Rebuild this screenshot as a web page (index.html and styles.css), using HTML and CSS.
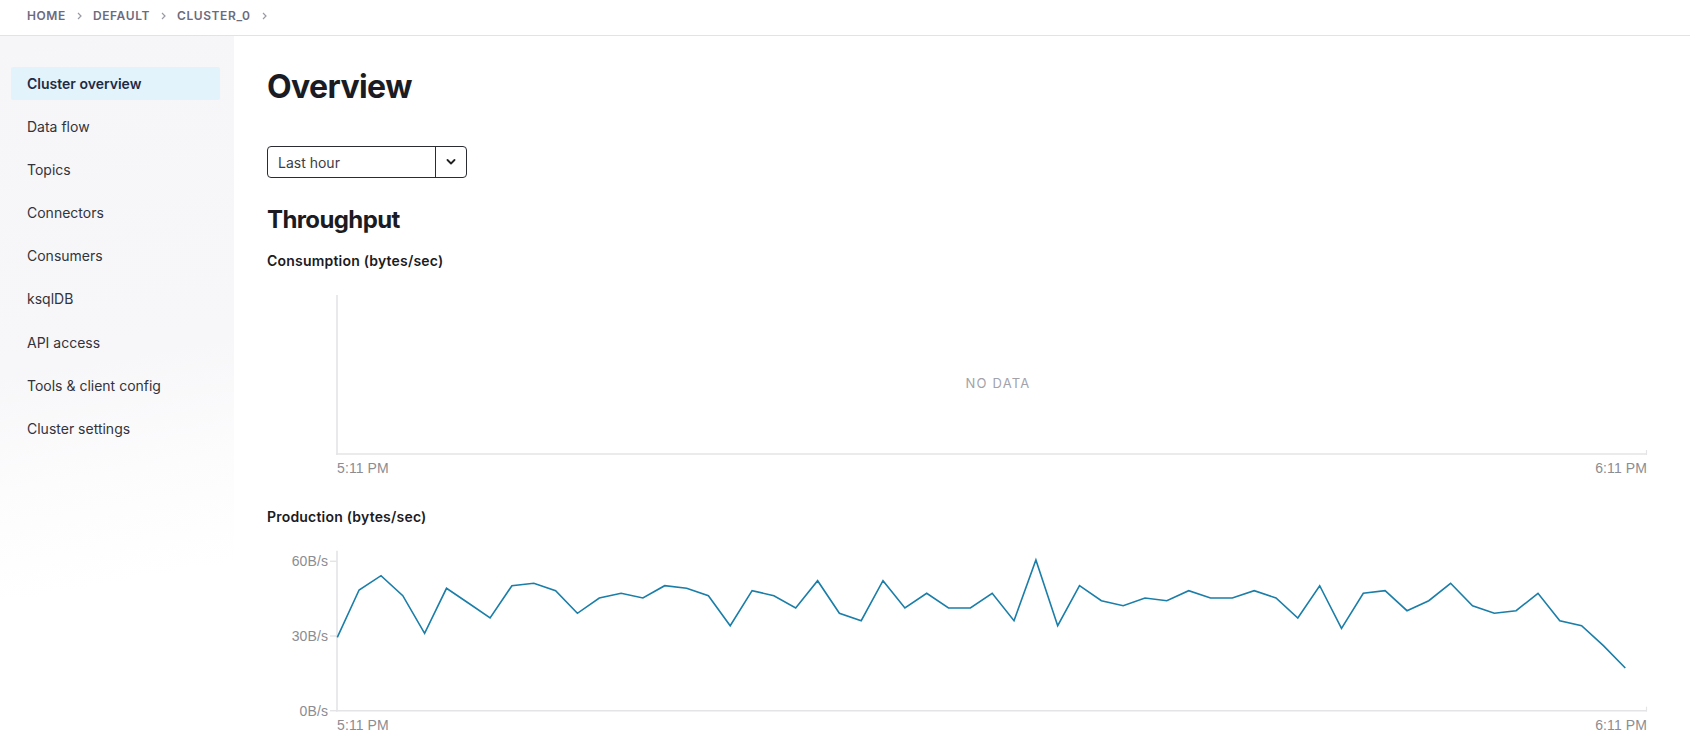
FILE: index.html
```html
<!DOCTYPE html>
<html lang="en">
<head>
<meta charset="utf-8">
<title>Overview</title>
<link rel="stylesheet" href="styles.css">
</head>
<body>
<header class="topbar">
  <nav class="crumbs">
    <span class="crumb">HOME</span>
    <svg class="chev" width="5" height="8" viewBox="0 0 5 8"><path d="M1 1l3 3-3 3" fill="none" stroke="#9a9aa6" stroke-width="1.2"/></svg>
    <span class="crumb">DEFAULT</span>
    <svg class="chev" width="5" height="8" viewBox="0 0 5 8"><path d="M1 1l3 3-3 3" fill="none" stroke="#9a9aa6" stroke-width="1.2"/></svg>
    <span class="crumb">CLUSTER_0</span>
    <svg class="chev" width="5" height="8" viewBox="0 0 5 8"><path d="M1 1l3 3-3 3" fill="none" stroke="#9a9aa6" stroke-width="1.2"/></svg>
  </nav>
</header>
<div class="layout">
  <aside class="sidebar">
    <a class="nav-item active">Cluster overview</a>
    <a class="nav-item">Data flow</a>
    <a class="nav-item">Topics</a>
    <a class="nav-item">Connectors</a>
    <a class="nav-item">Consumers</a>
    <a class="nav-item">ksqlDB</a>
    <a class="nav-item">API access</a>
    <a class="nav-item">Tools &amp; client config</a>
    <a class="nav-item">Cluster settings</a>
  </aside>
  <main class="main">
    <h1 class="title">Overview</h1>
    <div class="select">
      <span class="select-value">Last hour</span>
      <span class="select-btn"><svg width="10" height="6" viewBox="0 0 10 6"><path d="M1.5 1l3.5 3.5L8.5 1" fill="none" stroke="#222" stroke-width="1.8" stroke-linecap="round" stroke-linejoin="round"/></svg></span>
    </div>
    <h2 class="section">Throughput</h2>
    <h3 class="chart-title">Consumption (bytes/sec)</h3>
    <svg class="chart chart-empty" width="1389" height="208" viewBox="0 0 1389 208">
      <line x1="70" y1="24" x2="70" y2="184" stroke="#e4e4e6" stroke-width="1.6"/>
      <line x1="69" y1="183" x2="1380" y2="183" stroke="#e4e4e6" stroke-width="1.6"/>
      <line x1="1379.5" y1="179" x2="1379.5" y2="184" stroke="#e4e4e6" stroke-width="1.2"/>
      <text class="axis" x="70" y="202">5:11 PM</text>
      <text class="axis" x="1380" y="202" text-anchor="end">6:11 PM</text>
      <text class="nodata" x="731" y="117" text-anchor="middle">NO DATA</text>
    </svg>
    <h3 class="chart-title chart-title-2">Production (bytes/sec)</h3>
    <svg class="chart" width="1389" height="226" viewBox="0 0 1389 226">
      <line x1="70" y1="23.7" x2="70" y2="184.5" stroke="#e4e4e6" stroke-width="1.6"/>
      <line x1="69" y1="183.7" x2="1380" y2="183.7" stroke="#e4e4e6" stroke-width="1.6"/>
      <line x1="1379.5" y1="179.7" x2="1379.5" y2="184.5" stroke="#e4e4e6" stroke-width="1.2"/>
      <line x1="63" y1="34.3" x2="70" y2="34.3" stroke="#e4e4e6" stroke-width="1.4"/>
      <line x1="63" y1="109" x2="70" y2="109" stroke="#e4e4e6" stroke-width="1.4"/>
      <line x1="63" y1="183.7" x2="70" y2="183.7" stroke="#e4e4e6" stroke-width="1.4"/>
      <text class="axis" x="61" y="39.3" text-anchor="end">60B/s</text>
      <text class="axis" x="61" y="114" text-anchor="end">30B/s</text>
      <text class="axis" x="61" y="188.7" text-anchor="end">0B/s</text>
      <text class="axis" x="70" y="202.5">5:11 PM</text>
      <text class="axis" x="1380" y="202.5" text-anchor="end">6:11 PM</text>
      <polyline class="series" points="70.3,110.3 92.1,63 114,48.7 135.8,68.7 157.6,106.3 179.5,61.3 201.3,76 223.1,91 244.9,58.7 266.8,56.3 288.6,63.7 310.4,86.3 332.3,71 354.1,66.3 375.9,71 397.7,58.7 419.6,61.3 441.4,68.7 463.2,98.7 485.1,63.7 506.9,68.7 528.7,81 550.6,53.7 572.4,86.3 594.2,93.7 616,53.7 637.9,81 659.7,66.3 681.5,81 703.4,81 725.2,66.3 747,93.7 768.9,33 790.7,98.7 812.5,58.7 834.4,73.7 856.2,78.7 878,71 899.8,73.7 921.7,63.7 943.5,71 965.3,71 987.2,63.7 1009,71 1030.8,91 1052.7,58.7 1074.5,101.3 1096.3,66.3 1118.1,63.7 1140,83.7 1161.8,73.7 1183.6,56.3 1205.5,78.7 1227.3,86.3 1249.1,83.7 1271,66.3 1292.8,93.7 1314.6,98.7 1336.4,118.7 1358.3,141"/>
    </svg>
  </main>
</div>
</body>
</html>
```
FILE: styles.css
```css
* { box-sizing: border-box; }
html, body { margin: 0; padding: 0; }
body {
  font-family: Inter, "Noto Sans", "Liberation Sans", sans-serif;
  color: #1c1c24;
  background: #fff;
  width: 1690px;
  height: 754px;
  overflow: hidden;
}
.topbar {
  height: 36px;
  border-bottom: 1px solid #e3e3e6;
  display: flex;
  align-items: center;
  padding-left: 27px;
}
.crumbs {
  display: flex;
  align-items: center;
  gap: 11px;
  margin-top: -4px;
}
.crumb {
  font-size: 12px;
  font-weight: 600;
  letter-spacing: 0.6px;
  color: #6c6b7d;
  line-height: 16px;
}
.chev { display: block; }
.layout {
  display: flex;
  height: 718px;
}
.sidebar {
  width: 234px;
  flex: none;
  padding: 31px 14px 0 11px;
  display: flex;
  flex-direction: column;
  gap: 10.1px;
  background: linear-gradient(170deg, #f6f6f8 0%, #f7f7f9 45%, #fcfcfd 60%, #ffffff 75%);
}
.nav-item {
  display: flex;
  align-items: center;
  height: 33px;
  padding-left: 16px;
  font-size: 14px;
  color: #33333b;
  border-radius: 2px;
}
.nav-item.active {
  background: #e3f3fb;
  color: #1e2b45;
  font-weight: 600;
}
.main {
  flex: 1;
  padding: 31px 34px 0 33px;
}
.title {
  margin: 0;
  font-size: 32px;
  line-height: 40px;
  font-weight: 700;
  color: #1b1b23;
  letter-spacing: -0.6px;
}
.select {
  margin-top: 39px;
  width: 200px;
  height: 32px;
  border: 1px solid #2b2b33;
  border-radius: 4px;
  display: flex;
  align-items: stretch;
}
.select-value {
  flex: 1;
  display: flex;
  align-items: center;
  padding-left: 10px;
  font-size: 14px;
  color: #3d3d45;
}
.select-btn {
  width: 31px;
  border-left: 1px solid #2b2b33;
  display: flex;
  align-items: center;
  justify-content: center;
}
.select-btn svg { display: block; }
.section {
  margin: 26px 0 0;
  font-size: 24px;
  line-height: 32px;
  font-weight: 700;
  color: #1b1b23;
  letter-spacing: -0.6px;
}
.chart-title {
  margin: 15px 0 0;
  font-size: 14px;
  line-height: 20px;
  font-weight: 600;
  color: #1b1b23;
  letter-spacing: 0.2px;
}
.chart-title-2 { margin-top: 28px; }
.chart { display: block; }
.axis {
  font-family: "Liberation Sans", Arial, sans-serif;
  font-size: 14px;
  letter-spacing: 0.1px;
  fill: #8c8c92;
}
.nodata {
  font-family: Inter, "Noto Sans", "Liberation Sans", sans-serif;
  font-size: 13px;
  letter-spacing: 1.2px;
  fill: #a2a2aa;
}
.series {
  fill: none;
  stroke: #1a7ea8;
  stroke-width: 1.6;
  stroke-linejoin: miter;
}
```
